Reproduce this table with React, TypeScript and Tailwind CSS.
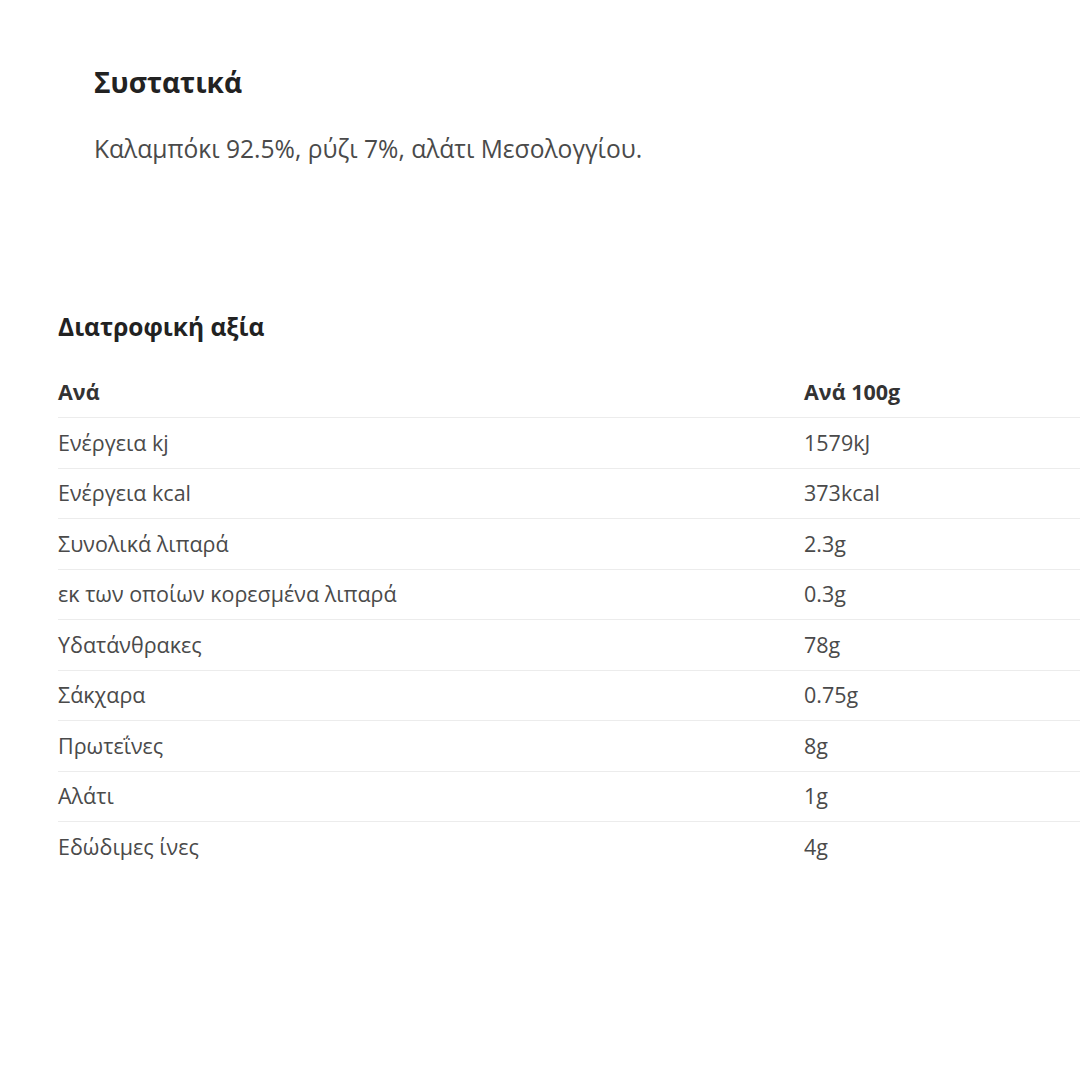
import React from 'react'

const rows: [string, string][] = [
  ['Ενέργεια kj', '1579kJ'],
  ['Ενέργεια kcal', '373kcal'],
  ['Συνολικά λιπαρά', '2.3g'],
  ['εκ των οποίων κορεσμένα λιπαρά', '0.3g'],
  ['Υδατάνθρακες', '78g'],
  ['Σάκχαρα', '0.75g'],
  ['Πρωτεΐνες', '8g'],
  ['Αλάτι', '1g'],
  ['Εδώδιμες ίνες', '4g'],
]

function App() {
  return (
    <div className="w-[1080px] h-[1080px] overflow-hidden bg-white font-['Open_Sans',sans-serif]">
      <section className="pl-[94px] pt-[64px]">
        <h2 className="text-[28px] leading-[36px] font-bold text-[#222]">Συστατικά</h2>
        <p className="mt-[32px] text-[24.6px] leading-[34px] text-[#4a4a4a]">
          Καλαμπόκι 92.5%, ρύζι 7%, αλάτι Μεσολογγίου.
        </p>
      </section>
      <section className="pl-[58px] mt-[145px]">
        <h3 className="text-[24.5px] leading-[32px] font-bold text-[#222]">Διατροφική αξία</h3>
        <div className="mt-[24px]">
          <div className="flex items-center h-[51px] border-b border-[#ececec] text-[21.5px] font-bold text-[#333]">
            <div className="w-[746px]">Ανά</div>
            <div>Ανά 100g</div>
          </div>
          {rows.map(([label, value], i) => (
            <div
              key={label}
              className={`flex items-center h-[50.5px] text-[21.5px] text-[#4a4a4a] ${i < rows.length - 1 ? 'border-b border-[#ececec]' : ''}`}
            >
              <div className="w-[746px]">{label}</div>
              <div>{value}</div>
            </div>
          ))}
        </div>
      </section>
    </div>
  )
}

export default App
